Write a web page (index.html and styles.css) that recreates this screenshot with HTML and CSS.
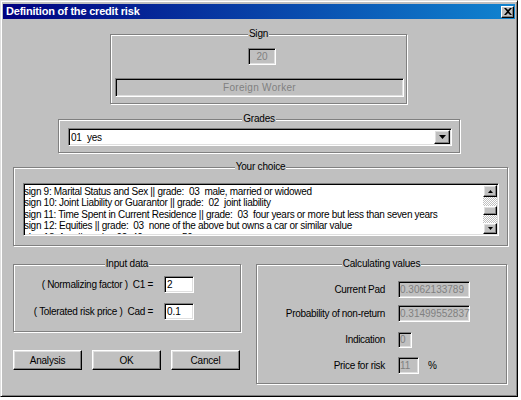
FILE: index.html
```html
<!DOCTYPE html>
<html>
<head>
<meta charset="utf-8">
<title>Definition of the credit risk</title>
<link rel="stylesheet" href="styles.css">
</head>
<body>
<div class="window">
  <div class="titlebar">
    <span class="title">Definition of the credit risk</span>
    <span class="close"><svg width="8" height="7" viewBox="0 0 8 7"><path d="M0 0h2l2 2 2-2h2L5 3.5 8 7H6L4 5 2 7H0l3-3.5z" fill="#000"/></svg></span>
  </div>
  <div class="client">
    <div class="group g-sign">
      <div class="legend"><span>Sign</span></div>
      <div class="field sunken disabled f-num">20</div>
      <div class="field sunken disabled f-name">Foreign Worker</div>
    </div>

    <div class="group g-grades">
      <div class="legend"><span>Grades</span></div>
      <div class="combo sunken">
        <span class="combo-text">01  yes</span>
        <span class="combo-btn raised"><svg width="7" height="4" viewBox="0 0 7 4"><path d="M0 0h7L3.5 4z" fill="#000"/></svg></span>
      </div>
    </div>

    <div class="group g-choice">
      <div class="legend"><span>Your choice</span></div>
      <div class="listbox sunken">
        <div class="list-items">
          <div class="item">sign 9: Marital Status and Sex || grade:  03  male, married or widowed</div>
          <div class="item">sign 10: Joint Liability or Guarantor || grade:  02  joint liability</div>
          <div class="item">sign 11: Time Spent in Current Residence || grade:  03  four years or more but less than seven years</div>
          <div class="item">sign 12: Equities || grade:  03  none of the above but owns a car or similar value</div>
          <div class="item">sign 13: Age || grade:  02  40 &lt;=     &lt;= 59</div>
        </div>
        <div class="scrollbar">
          <div class="sb-btn raised sb-up"><svg width="5" height="3" viewBox="0 0 5 3"><path d="M2.5 0L5 3H0z" fill="#000"/></svg></div>
          <div class="sb-track"></div>
          <div class="sb-thumb raised"></div>
          <div class="sb-track"></div>
          <div class="sb-btn raised sb-down"><svg width="5" height="3" viewBox="0 0 5 3"><path d="M0 0h5L2.5 3z" fill="#000"/></svg></div>
        </div>
      </div>
    </div>

    <div class="bottom">
      <div class="col-left">
        <div class="group g-input">
          <div class="legend"><span>Input data</span></div>
          <div class="row in-row1">
            <span class="lbl lbl-in">( Normalizing factor )  C1 =</span>
            <span class="field sunken edit w-in">2</span>
          </div>
          <div class="row in-row2">
            <span class="lbl lbl-in">( Tolerated risk price )  Cad =</span>
            <span class="field sunken edit w-in">0.1</span>
          </div>
        </div>
        <div class="buttons">
          <button class="btn">Analysis</button>
          <button class="btn">OK</button>
          <button class="btn">Cancel</button>
        </div>
      </div>

      <div class="group g-calc">
        <div class="legend"><span>Calculating values</span></div>
        <div class="row calc-row1">
          <span class="lbl lbl-calc">Current Pad</span>
          <span class="field sunken disabled w-long">0.3062133789</span>
        </div>
        <div class="row calc-row2">
          <span class="lbl lbl-calc">Probability of non-return</span>
          <span class="field sunken disabled w-long">0.31499552837</span>
        </div>
        <div class="row calc-row3">
          <span class="lbl lbl-calc">Indication</span>
          <span class="field sunken disabled w-ind">0</span>
        </div>
        <div class="row calc-row4">
          <span class="lbl lbl-calc">Price for risk</span>
          <span class="field sunken disabled w-price">11</span>
          <span class="pct">%</span>
        </div>
      </div>
    </div>
  </div>
</div>
</body>
</html>
```

FILE: styles.css
```css
* { box-sizing: border-box; }

html, body {
  margin: 0;
  padding: 0;
  background: #fff;
}

body {
  font-family: "Liberation Sans", Arial, sans-serif;
  font-size: 10px;
  letter-spacing: -0.3px;
  color: #000;
}

.window {
  width: 518px;
  height: 397px;
  background: #c0c0c0;
  border: 1px solid;
  border-color: #dfdfdf #000 #000 #dfdfdf;
  box-shadow: inset 1px 1px #fff, inset -1px -1px #808080;
  padding: 3px 2px 2px 2px;
}

.titlebar {
  height: 15px;
  display: flex;
  align-items: center;
  justify-content: space-between;
  padding: 0 1px 0 3px;
  background: linear-gradient(to right, #000080, #1084d0);
}

.title {
  color: #fff;
  font-weight: bold;
  font-size: 11px;
  letter-spacing: -0.2px;
  line-height: 15px;
}

.close {
  width: 13px;
  height: 12px;
  display: flex;
  align-items: center;
  justify-content: center;
  background: #c0c0c0;
  border: 1px solid;
  border-color: #fff #000 #000 #fff;
  box-shadow: inset -1px -1px #808080;
}

.close svg { display: block; }

/* bevels */
.raised {
  background: #c0c0c0;
  border: 1px solid;
  border-color: #fff #000 #000 #fff;
  box-shadow: inset -1px -1px #808080, inset 1px 1px #dfdfdf;
}

.sunken {
  border: 1px solid;
  border-color: #808080 #fff #fff #808080;
  box-shadow: inset 1px 1px #000, inset -1px -1px #dfdfdf;
  padding: 1px;
}

/* group boxes */
.group {
  border: 1px solid #808080;
  box-shadow: 1px 1px #fff, inset 1px 1px #fff;
}

.legend {
  display: flex;
  justify-content: center;
  height: 12px;
  margin-top: -7px;
  line-height: 12px;
  letter-spacing: -0.2px;
}

.legend span {
  background: #c0c0c0;
  padding: 0 1px;
}

/* fields */
.field {
  display: flex;
  align-items: center;
  padding: 0 1px;
  line-height: 12px;
  letter-spacing: 0;
  white-space: nowrap;
}

.disabled {
  color: #808080;
  background: #c0c0c0;
}

.edit {
  background: #fff;
  color: #000;
}

/* Sign group */
.g-sign {
  margin: 15px 0 0 107px;
  width: 297px;
  height: 70px;
}

.f-num {
  margin: 8px 0 0 137px;
  width: 28px;
  height: 17px;
  justify-content: center;
}

.f-name {
  margin: 13px 0 0 4px;
  width: 289px;
  height: 19px;
  justify-content: center;
  letter-spacing: 0.3px;
}

/* Grades group */
.g-grades {
  margin: 15px 0 0 55px;
  width: 402px;
  height: 34px;
}

.combo {
  margin: 3px 0 0 9px;
  width: 384px;
  height: 18px;
  display: flex;
  align-items: stretch;
  background: #fff;
}

.combo-text {
  flex: 1;
  display: flex;
  align-items: center;
  padding-left: 1px;
  white-space: pre;
  letter-spacing: -0.2px;
}

.combo-btn {
  width: 16px;
  display: flex;
  align-items: center;
  justify-content: center;
}

.combo-btn svg { display: block; }

/* Your choice group */
.g-choice {
  margin: 14px 0 0 10px;
  width: 495px;
  height: 79px;
}

.listbox {
  margin: 10px 0 0 9px;
  width: 476px;
  height: 53px;
  display: flex;
  background: #fff;
}

.list-items {
  flex: 1;
  overflow: hidden;
  line-height: 11.4px;
  margin-left: -1px;
  padding-top: 1px;
}

.item {
  white-space: pre;
}

.scrollbar {
  width: 14px;
  display: flex;
  flex-direction: column;
}

.sb-btn {
  height: 12px;
  display: flex;
  align-items: center;
  justify-content: center;
}

.sb-down { height: 11px; }

.sb-btn svg { display: block; }

.sb-track {
  flex: 1;
  background: repeating-conic-gradient(#c0c0c0 0 25%, #fff 0 50%) 0 0 / 2px 2px;
}

.sb-thumb {
  height: 9px;
}

/* bottom area */
.bottom {
  display: flex;
  align-items: flex-start;
  margin: 18px 0 0 10px;
}

.col-left {
  width: 228px;
}

.g-input {
  width: 228px;
  height: 68px;
}

.row {
  display: flex;
  align-items: center;
  height: 17px;
}

.lbl {
  text-align: right;
  white-space: pre;
  letter-spacing: -0.3px;
  line-height: 12px;
}

.lbl-in {
  width: 139px;
  margin-right: 11px;
}

.w-in {
  width: 30px;
  height: 17px;
  padding-left: 2px;
}

.in-row1 { margin-top: 6px; }
.in-row2 { margin-top: 10px; }

.buttons {
  display: flex;
  gap: 10px;
  margin-top: 18px;
}

.btn {
  width: 69px;
  height: 20px;
  padding: 0;
  font: inherit;
  letter-spacing: -0.2px;
  color: #000;
  background: #c0c0c0;
  border: 1px solid;
  border-color: #fff #000 #000 #fff;
  box-shadow: inset -1px -1px #808080, inset 1px 1px #dfdfdf;
}

.g-calc {
  margin-left: 15px;
  width: 251px;
  height: 120px;
}

.lbl-calc {
  width: 128px;
  margin-right: 13px;
}

.w-long { width: 72px; height: 17px; }
.w-ind { width: 14px; height: 16px; }
.w-price { width: 21px; height: 17px; }

.calc-row1 { margin-top: 11px; }
.calc-row2 { margin-top: 7px; }
.calc-row3 { margin-top: 10px; height: 16px; }
.calc-row4 { margin-top: 9px; }

.pct {
  margin-left: 9px;
}
```
